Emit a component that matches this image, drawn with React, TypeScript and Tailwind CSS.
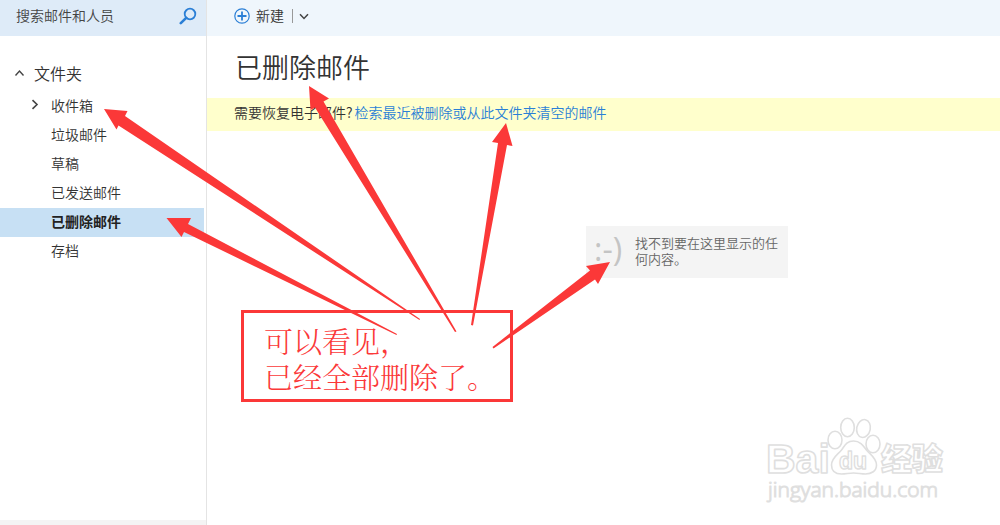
import React from "react";

const folders = [
  { name: "收件箱", expandable: true },
  { name: "垃圾邮件" },
  { name: "草稿" },
  { name: "已发送邮件" },
  { name: "已删除邮件", selected: true },
  { name: "存档" },
];

function SearchIcon() {
  return (
    <svg width="18" height="18" viewBox="0 0 18 18" fill="none" stroke="#2b7fd6" aria-hidden="true">
      <circle cx="11" cy="7" r="5.3" strokeWidth="1.8" />
      <path d="M7.2 10.8 1.8 16.2" strokeWidth="2.6" strokeLinecap="round" />
    </svg>
  );
}

function PlusIcon() {
  return (
    <svg width="16" height="16" viewBox="0 0 16 16" fill="none" stroke="#2b7fd6" aria-hidden="true">
      <circle cx="8" cy="8" r="7.2" strokeWidth="1.2" />
      <path d="M8 3.5v9M3.5 8h9" strokeWidth="1.8" />
    </svg>
  );
}

function Sidebar() {
  return (
    <aside className="flex w-[207px] shrink-0 flex-col border-r border-[#e4e4e4]">
      <div className="flex h-9 items-center bg-[#deebf8] pb-1 pl-4 pr-[9px]">
        <input
          aria-label="搜索邮件和人员"
          placeholder="搜索邮件和人员"
          className="min-w-0 flex-1 bg-transparent pb-0.5 text-sm outline-none placeholder:text-[#444]"
        />
        <button aria-label="搜索">
          <SearchIcon />
        </button>
      </div>
      <nav className="flex-1 pt-6">
        <button className="flex h-7 items-center pb-0.5 pl-[14px] text-base text-[#333]">
          <svg width="11" height="8" viewBox="0 0 11 8" fill="none" stroke="#444" strokeWidth="1.4" aria-hidden="true">
            <path d="M1.5 6.5l4-4.5 4 4.5" />
          </svg>
          <span className="pl-[9px]">文件夹</span>
        </button>
        <ul className="pr-[2px] pt-1">
          {folders.map((f) => (
            <li key={f.name}>
              <a
                href="#"
                className={
                  f.selected
                    ? "flex h-[29px] items-center bg-[#c7e0f4] pb-1 font-bold text-[#222]"
                    : "flex h-[29px] items-center pb-1 text-[#333]"
                }
              >
                <span className="flex w-[51px] justify-center pl-[19px]">
                  {f.expandable && (
                    <svg width="8" height="11" viewBox="0 0 8 11" fill="none" stroke="#444" strokeWidth="1.6" aria-hidden="true">
                      <path d="M1.5 1.2 6 5.5 1.5 9.8" />
                    </svg>
                  )}
                </span>
                {f.name}
              </a>
            </li>
          ))}
        </ul>
      </nav>
      <div className="h-[5px] bg-[#f4f4f4]" />
    </aside>
  );
}

function Annotations() {
  return (
    <>
      <svg className="pointer-events-none absolute left-0 top-0 z-10" width="1000" height="525" viewBox="0 0 1000 525" fill="#fb3838" aria-hidden="true">
        <path d="M104 109 127.5 111 125 116 420 319 419.5 320 118.5 125.5 116.5 129.5Z" />
        <path d="M166.5 218 191 218 188 224 397 334 396.5 335 184 232 181.5 237Z" />
        <path d="M309 86 329 98.5 323.5 101.5 456.5 331.5 455 332 315 107.5 310.5 110Z" />
        <path d="M506 123 512.5 146 507 145 473 325.5 471 325 498 143 492 142Z" />
        <path d="M610 262 598 284 595 279.5 493.5 348.5 492.5 347 590 270.5 586 266Z" />
      </svg>
      <div className="absolute left-[241px] top-[310px] z-10 h-[92px] w-[272px] border-[3px] border-[#fb3838] pl-5 pt-3 font-['Liberation_Serif','Noto_Serif_CJK_SC','Noto_Sans_CJK_SC',serif] text-[29px] font-light leading-9 text-[#fb3838]">
        可以看见，
        <br />
        已经全部删除了。
      </div>
    </>
  );
}

function Watermark() {
  return (
    <svg
      className="pointer-events-none absolute bottom-[20px] right-[50px] z-10"
      width="190"
      height="95"
      viewBox="0 0 190 95"
      fill="#fff"
      stroke="#dfdfdf"
      strokeWidth="1.6"
      strokeLinejoin="round"
      role="img"
      aria-label="Baidu 经验 jingyan.baidu.com"
    >
      <text x="6" y="63" fontSize="41" fontWeight="700" fontFamily="'Liberation Sans', sans-serif">Bai</text>
      <ellipse cx="75" cy="30" rx="7" ry="8.7" />
      <ellipse cx="87.5" cy="17.5" rx="6.8" ry="9.2" />
      <ellipse cx="103.5" cy="18.5" rx="6.8" ry="9" transform="rotate(12 103.5 18.5)" />
      <ellipse cx="113" cy="34" rx="7" ry="8.7" />
      <path d="M93.5 31c7 0 10 5 13 9 4 5 10 8 10 15 0 6-5 9-11 9-4 0-8-1-12-1s-8 1-12 1c-6 0-10-3-10-9 0-7 6-10 10-15 3-4 5-9 12-9Z" />
      <text x="79" y="59" fontSize="23" fontWeight="700" strokeWidth="1.4" fontFamily="'Liberation Sans', sans-serif">du</text>
      <text x="121" y="60" fontSize="31" fontWeight="900" fontFamily="'Noto Sans CJK SC', sans-serif">经验</text>
      <text x="8" y="87" fontSize="21" strokeWidth="1.2" fontFamily="'Open Sans', sans-serif">jingyan.baidu.com</text>
    </svg>
  );
}

export default function App() {
  return (
    <div className="relative flex min-h-screen overflow-hidden bg-white font-['Noto_Sans_CJK_SC',sans-serif] text-sm font-[350] text-[#333]">
      <Sidebar />
      <main className="min-w-0 flex-1">
        <header className="flex h-9 items-center bg-[#eff6fc] pb-1 pl-[27px]">
          <button className="flex items-center gap-[6px]">
            <PlusIcon />
            <span className="pb-0.5">新建</span>
          </button>
          <span className="ml-2 h-[14px] w-px bg-[#999]" />
          <button aria-label="更多新建选项" className="ml-[6px]">
            <svg width="10" height="7" viewBox="0 0 10 7" fill="none" stroke="#444" strokeWidth="1.5" aria-hidden="true">
              <path d="M1 1.2 5 5.4 9 1.2" />
            </svg>
          </button>
        </header>
        <h1 className="flex h-[62px] items-center pl-7 text-[27px] font-[350] text-[#333]">已删除邮件</h1>
        <p className="flex h-[33px] items-center gap-0.5 bg-[#ffffcc] pb-[5px] pl-[27px]">
          需要恢复电子邮件?
          <a href="#" className="text-[#2b7fd6]">检索最近被删除或从此文件夹清空的邮件</a>
        </p>
        <div className="ml-[379px] mt-[95px] flex h-[52px] w-[202px] items-center bg-[#f4f4f4] pb-0.5 pl-2 text-[13px] leading-4 text-[#666]">
          <span className="w-[41px] shrink-0 pb-1 font-['Open_Sans',sans-serif] text-[32px] font-normal text-[#c4c4c4]">:-)</span>
          <span className="w-[144px]">找不到要在这里显示的任何内容。</span>
        </div>
      </main>
      <Annotations />
      <Watermark />
    </div>
  );
}
